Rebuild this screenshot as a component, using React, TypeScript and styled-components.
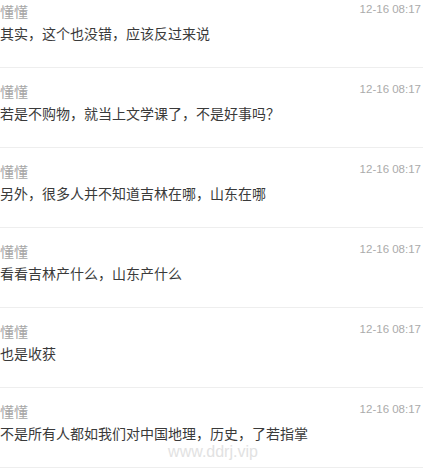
import styled, { createGlobalStyle } from "styled-components";

const GlobalStyle = createGlobalStyle`
    html, body {
        margin: 0;
        padding: 0;
        background: #fff;
        overflow: hidden;
    }
    body {
        font-family: "Liberation Sans", "Noto Sans CJK SC", sans-serif;
    }
`;

interface Comment {
    id: number;
    name: string;
    time: string;
    text: string;
}

const comments: Comment[] = [
    { id: 1, name: "懂懂", time: "12-16 08:17", text: "其实，这个也没错，应该反过来说" },
    { id: 2, name: "懂懂", time: "12-16 08:17", text: "若是不购物，就当上文学课了，不是好事吗？" },
    { id: 3, name: "懂懂", time: "12-16 08:17", text: "另外，很多人并不知道吉林在哪，山东在哪" },
    { id: 4, name: "懂懂", time: "12-16 08:17", text: "看看吉林产什么，山东产什么" },
    { id: 5, name: "懂懂", time: "12-16 08:17", text: "也是收获" },
    { id: 6, name: "懂懂", time: "12-16 08:17", text: "不是所有人都如我们对中国地理，历史，了若指掌" },
];

const App = () => {
    return (
        <Page>
            <GlobalStyle />
            <List>
                {comments.map((c) => (
                    <Item key={c.id}>
                        <Header>
                            <Name>{c.name}</Name>
                            <Time>{c.time}</Time>
                        </Header>
                        <Content>{c.text}</Content>
                    </Item>
                ))}
            </List>
            <Watermark>www.ddrj.vip</Watermark>
        </Page>
    );
};

export default App;

const Page = styled.div`
    position: relative;
    width: 426px;
    height: 471px;
    overflow: hidden;
`;

const List = styled.ul`
    list-style: none;
    margin: -12px 0 0;
    padding: 0;
    width: 423px;
`;

const Item = styled.li`
    padding: 14px 2px 23px 0;
    border-bottom: 1px solid #eeeeee;
    display: flex;
    flex-direction: column;
    gap: 2px;
`;

const Header = styled.div`
    display: flex;
    justify-content: space-between;
    align-items: flex-start;
`;

const Name = styled.span`
    font-size: 14px;
    line-height: 20px;
    color: #a6a6a6;
`;

const Time = styled.span`
    font-size: 11.5px;
    line-height: 14px;
    color: #ababab;
`;

const Content = styled.p`
    margin: 0;
    font-size: 14px;
    line-height: 20px;
    color: #3a3a3a;
`;

const Watermark = styled.div`
    position: absolute;
    left: 0;
    right: 0;
    top: 442px;
    text-align: center;
    font-size: 16px;
    line-height: 20px;
    color: #e2e2e2;
    pointer-events: none;
`;
